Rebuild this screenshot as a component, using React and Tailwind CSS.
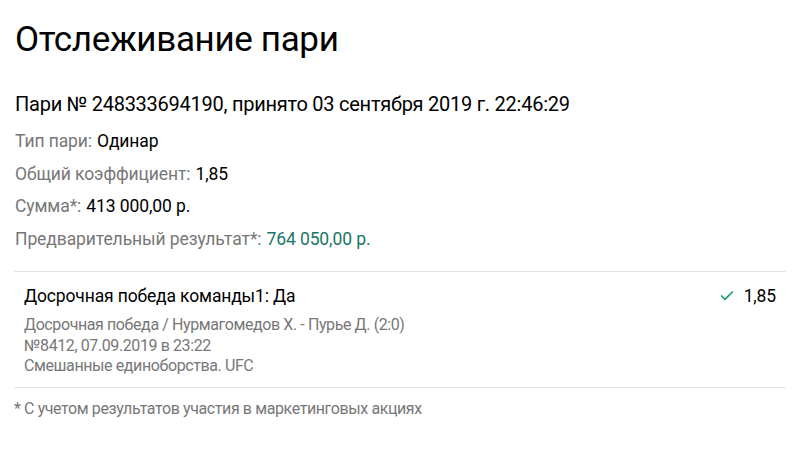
import { Check } from 'lucide-react'

const ROWS = [
  { label: 'Тип пари:', value: 'Одинар' },
  { label: 'Общий коэффициент:', value: '1,85' },
  { label: 'Сумма*:', value: '413 000,00 р.' },
  { label: 'Предварительный результат*:', value: '764 050,00 р.', green: true },
]

export default function App() {
  return (
    <div className="w-[800px] h-[450px] bg-white px-[14px] pt-[18px] text-black" style={{ fontFamily: 'Roboto, sans-serif' }}>
      <h1 className="text-[35px] leading-[44px] font-normal tracking-[-0.35px] pl-[1px]">Отслеживание пари</h1>

      <p className="mt-[29px] text-[20px] leading-[26px] tracking-[-0.25px] pl-[1px]">
        Пари № 248333694190, принято 03 сентября 2019 г. 22:46:29
      </p>

      <div className="mt-[8px] flex flex-col pl-[1px]">
        {ROWS.map(r => (
          <div key={r.label} className="h-[32.5px] flex items-center text-[17.5px] tracking-[-0.1px]">
            <span className="text-[#777777]">{r.label}</span>
            <span className={`ml-[5px] ${r.green ? 'text-[#1b7567]' : 'text-black'}`}>{r.value}</span>
          </div>
        ))}
      </div>

      <div className="mt-[16px] border-t border-b border-[#e2e2e2] px-[10px] pt-[12px] pb-[10px]">
        <div className="flex items-center justify-between text-[17.5px] leading-[24px] tracking-[-0.15px]">
          <span>Досрочная победа команды1: Да</span>
          <span className="flex items-center gap-[9px]">
            <Check size={16} strokeWidth={2.5} className="text-[#1a9b6c]" />
            1,85
          </span>
        </div>
        <div className="mt-[7px] text-[16px] leading-[20.5px] tracking-[-0.4px] text-[#777777]">
          <p>Досрочная победа / Нурмагомедов Х. - Пурье Д. (2:0)</p>
          <p>№8412, 07.09.2019 в 23:22</p>
          <p>Смешанные единоборства. UFC</p>
        </div>
      </div>

      <p className="mt-[11px] text-[16px] leading-[20px] tracking-[-0.4px] text-[#777777]">* С учетом результатов участия в маркетинговых акциях</p>
    </div>
  )
}
